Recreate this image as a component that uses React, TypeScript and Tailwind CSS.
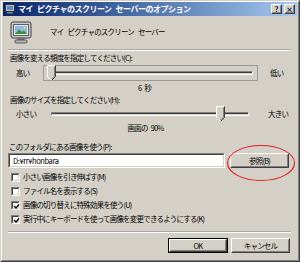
import React from 'react';

const FONT = "font-['Noto_Sans_CJK_JP','Noto_Sans',sans-serif]";

// half-width gap that survives negative tracking
const Sp = ({ w = 'w-[4px]' }: { w?: string }) => <span className={`inline-block ${w}`} />;

function Raised({ children, className = '' }: { children?: React.ReactNode; className?: string }) {
  // classic 3D button
  return (
    <div className={`border border-t-white border-l-white border-r-[#404040] border-b-[#404040] bg-[#d4d0c8] ${className}`}>
      <div className="w-full h-full border border-t-[#d4d0c8] border-l-[#d4d0c8] border-r-[#808080] border-b-[#808080] flex items-center justify-center">
        {children}
      </div>
    </div>
  );
}

function Sunken({ children, className = '' }: { children?: React.ReactNode; className?: string }) {
  return (
    <div className={`border border-t-[#808080] border-l-[#808080] border-r-white border-b-white ${className}`}>
      <div className="w-full h-full border border-t-[#404040] border-l-[#404040] border-r-[#d4d0c8] border-b-[#d4d0c8] bg-white flex items-center">
        {children}
      </div>
    </div>
  );
}

function Thumb() {
  return (
    <svg width="9" height="16" viewBox="0 0 9 16" className="block">
      <polygon points="0.5,0.5 8.5,0.5 8.5,11.5 4.5,15.5 0.5,11.5" fill="#d4d0c8" />
      <polyline points="0.5,11.5 0.5,0.5 8,0.5" fill="none" stroke="#fff" />
      <polyline points="8.5,0.5 8.5,11.5 4.5,15.5" fill="none" stroke="#404040" />
      <polyline points="7.5,1.5 7.5,11 4.5,14" fill="none" stroke="#808080" />
      <line x1="0.5" y1="11.5" x2="4.5" y2="15.5" stroke="#fff" />
    </svg>
  );
}

function Slider({ pos, focus }: { pos: number; focus?: boolean }) {
  return (
    <div className={`relative flex-1 h-[16px] flex items-center ${focus ? 'border border-[#9a9a9a]' : 'border border-transparent'}`}>
      <div className="mx-[4px] flex-1 h-[4px] border border-t-[#808080] border-l-[#808080] border-r-white border-b-white">
        <div className="h-full border-t border-t-[#404040] bg-[#d4d0c8]" />
      </div>
      <div className="absolute top-[-1px]" style={{ left: pos }}>
        <Thumb />
      </div>
    </div>
  );
}

function Check({ checked, label }: { checked?: boolean; label: string }) {
  return (
    <div className="h-[14px] flex items-center">
      <div className="ml-[3px] w-[9px] h-[9px] border border-t-[#808080] border-l-[#808080] border-r-white border-b-white">
        <div className="w-full h-full border border-t-[#404040] border-l-[#404040] border-r-[#d4d0c8] border-b-[#d4d0c8] bg-white">
          {checked && (
            <svg width="7" height="7" viewBox="0 0 7 7" className="block">
              <path d="M1 3 L3 5 L6 1.5" fill="none" stroke="#000" strokeWidth="1.4" />
            </svg>
          )}
        </div>
      </div>
      <span className="ml-[3px]">{label}</span>
    </div>
  );
}

function MonitorIcon() {
  return (
    <svg width="22" height="23" viewBox="0 0 22 23" className="block">
      <rect x="1" y="1" width="20" height="16" rx="2" fill="#c8c8c8" stroke="#404040" />
      <rect x="3.5" y="3.5" width="15" height="11" fill="#dfe8f5" stroke="#606060" />
      <rect x="5" y="5" width="12" height="8" fill="#8fb7e0" />
      <path d="M5 13 L9 8.5 L12 11 L14 9.5 L17 13 Z" fill="#3f8f3a" />
      <circle cx="14.5" cy="7" r="1" fill="#ffe04a" />
      <rect x="8" y="17" width="6" height="2" fill="#909090" stroke="#404040" strokeWidth="0.6" />
      <rect x="5" y="19" width="12" height="3" rx="1" fill="#b8b8b8" stroke="#404040" strokeWidth="0.8" />
    </svg>
  );
}

export default function App() {
  return (
    <div className={`w-[300px] h-[262px] bg-[#d4d0c8] border border-t-[#d4d0c8] border-l-[#d4d0c8] border-r-[#404040] border-b-[#404040] ${FONT} text-[7.5px] tracking-[-0.8px] text-black leading-none`}>
      <div className="w-full h-full border border-t-white border-l-white border-r-[#808080] border-b-[#808080] flex flex-col">
        {/* title bar */}
        <div className="mx-[1px] h-[14px] bg-gradient-to-r from-[#0a246a] to-[#a6caf0] flex items-center pl-[2px] pr-[2px]">
          <svg width="10" height="10" viewBox="0 0 10 10" className="block shrink-0">
            <rect x="0.5" y="0.5" width="9" height="7" fill="#c0c0c0" stroke="#303030" />
            <rect x="2" y="2" width="6" height="4" fill="#5a8fc8" />
            <rect x="2" y="8" width="6" height="1.5" fill="#808080" />
          </svg>
          <span className="ml-[3px] text-white font-bold text-[8px] tracking-[-0.5px]">
            マイ<Sp />ピクチャのスクリーン<Sp />セーバーのオプション
          </span>
          <div className="ml-auto flex gap-[2px]">
            <Raised className="w-[11px] h-[10px]">
              <span className="text-[7px] font-bold tracking-normal">?</span>
            </Raised>
            <Raised className="w-[11px] h-[10px]">
              <span className="text-[7px] font-bold tracking-normal">×</span>
            </Raised>
          </div>
        </div>

        <div className="flex-1 flex flex-col pl-[6px] pr-[7px]">
          {/* header */}
          <div className="h-[33px] flex items-start pt-[5px]">
            <div className="ml-[2px]">
              <MonitorIcon />
            </div>
            <span className="ml-[18px] mt-[7px]">
              マイ<Sp />ピクチャのスクリーン<Sp />セーバー
            </span>
          </div>
          <div className="h-[2px] border-t border-t-[#a8a8a8] border-b border-b-white" />

          <div className="h-[14px] flex items-center ml-[2px]">画像を変える頻度を指定してください(C):</div>
          <div className="h-[16px] flex items-center">
            <span className="w-[35px] pl-[8px]">高い</span>
            <Slider pos={3} focus />
            <span className="w-[33px] pl-[12px]">低い</span>
          </div>
          <div className="h-[13px] flex items-center justify-center pr-[10px]">
            6<Sp w="w-[3px]" />秒
          </div>

          <div className="h-[12px] flex items-center ml-[2px]">画像のサイズを指定してください(H):</div>
          <div className="h-[16px] flex items-center">
            <span className="w-[38px] pl-[8px]">小さい</span>
            <Slider pos={169} />
            <span className="w-[37px] pl-[14px]">大きい</span>
          </div>
          <div className="h-[12px] flex items-center justify-center pr-[8px]">
            画面の<Sp w="w-[3px]" />90%
          </div>

          <div className="h-[19px] flex items-end pb-[3px] ml-[1px]">このフォルダにある画像を使う(P):</div>
          <div className="h-[15px] flex items-center gap-[5px] relative">
            <Sunken className="w-[217px] h-[15px]">
              <span className="pl-[3px] tracking-[-0.4px]">D:¥rr¥honbara</span>
            </Sunken>
            <Raised className="w-[59px] h-[15px]">
              <span>参照(B)</span>
            </Raised>
            <svg width="70" height="38" viewBox="0 0 70 38" className="absolute left-[218px] top-[-9px] pointer-events-none">
              <ellipse cx="35" cy="19" rx="33.5" ry="17.5" fill="none" stroke="#e02020" strokeWidth="1.1" />
            </svg>
          </div>

          <div className="h-[2px]" />
          <Check label="小さい画像を引き伸ばす(M)" />
          <Check label="ファイル名を表示する(S)" />
          <Check checked label="画像の切り替えに特殊効果を使う(U)" />
          <Check checked label="実行中にキーボードを使って画像を変更できるようにする(K)" />

          <div className="h-[5px]" />
          <div className="h-[2px] border-t border-t-[#a8a8a8] border-b border-b-white" />

          <div className="mt-[5px] flex justify-end gap-[3px] pr-[1px]">
            <div className="border border-black">
              <Raised className="w-[58px] h-[13px]">
                <span>OK</span>
              </Raised>
            </div>
            <Raised className="w-[59px] h-[15px]">
              <span>キャンセル</span>
            </Raised>
          </div>
        </div>
      </div>
    </div>
  );
}
